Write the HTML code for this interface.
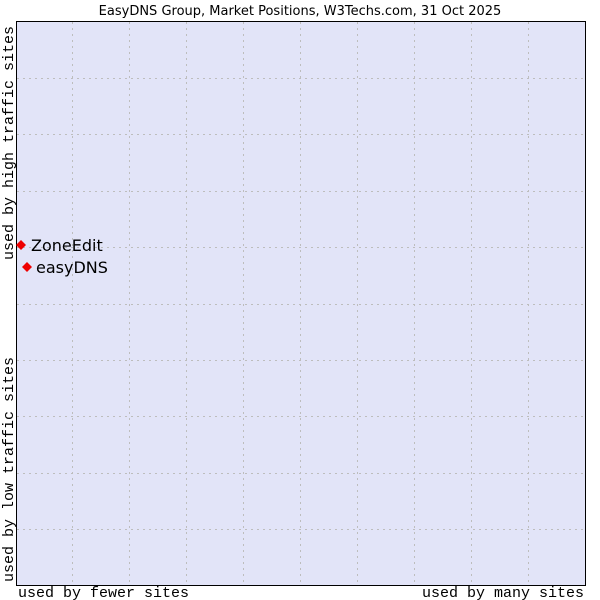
<!DOCTYPE html>
<html><head><style>body{margin:0;background:#fff}</style></head><body>
<svg width="600" height="600" xmlns="http://www.w3.org/2000/svg" style="display:block">
<rect x="16.5" y="21.5" width="569" height="564" fill="#e2e4f8" stroke="#000" stroke-width="1"/>
<g stroke="#bdbdbd" stroke-width="1" stroke-dasharray="2,4">
<path d="M72.5 22V585M129.5 22V585M186.5 22V585M243.5 22V585M300.5 22V585M357.5 22V585M414.5 22V585M471.5 22V585M528.5 22V585"/>
<path d="M17 78.5H585M17 134.5H585M17 191.5H585M17 247.5H585M17 304.5H585M17 360.5H585M17 416.5H585M17 473.5H585M17 529.5H585"/>
</g>
<text x="300" y="15" font-family="DejaVu Sans, sans-serif" font-size="13" text-anchor="middle">EasyDNS Group, Market Positions, W3Techs.com, 31 Oct 2025</text>
<g font-family="Liberation Mono, DejaVu Sans Mono, monospace" font-size="15">
<text x="18" y="597">used by fewer sites</text>
<text x="584" y="597" text-anchor="end">used by many sites</text>
<text transform="translate(13,260) rotate(-90)">used by high traffic sites</text>
<text transform="translate(13,582) rotate(-90)">used by low traffic sites</text>
</g>
<path d="M21 240L26 245L21 250L16 245Z" fill="#e00"/>
<path d="M27 262L32 267L27 272L22 267Z" fill="#e00"/>
<g font-family="DejaVu Sans, sans-serif" font-size="16">
<text x="31" y="251">ZoneEdit</text>
<text x="36" y="273">easyDNS</text>
</g>
</svg>
</body></html>
